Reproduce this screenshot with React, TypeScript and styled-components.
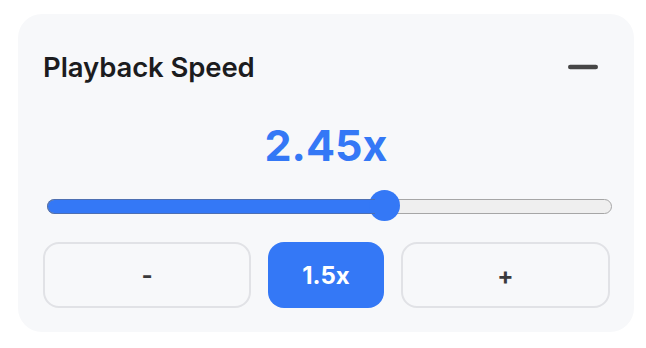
import React, { useState } from 'react';
import styled, { createGlobalStyle } from 'styled-components';

const GlobalStyle = createGlobalStyle`
  body {
    margin: 0;
    background: #ffffff;
    font-family: Inter, "Liberation Sans", Arial, sans-serif;
  }
`;

const Page = styled.div`
  padding: 14px 0 0 18px;
`;

const Card = styled.div`
  width: 616px;
  height: 318px;
  box-sizing: border-box;
  padding: 24px 25px;
  background-color: #f7f8fa;
  border-radius: 24px;
  display: flex;
  flex-direction: column;
`;

const Header = styled.div`
  height: 58px;
  display: flex;
  align-items: center;
  justify-content: space-between;
`;

const Title = styled.h2`
  margin: 0;
  font-size: 27.5px;
  font-weight: 600;
  color: #1c1c1e;
  letter-spacing: -0.1px;
`;

const CollapseButton = styled.button`
  width: 36px;
  height: 36px;
  margin-right: 8px;
  padding: 0;
  border: 0;
  background: transparent;
  display: flex;
  align-items: center;
  justify-content: center;
  cursor: pointer;
`;

const SpeedValue = styled.div`
  margin-top: 21px;
  height: 56px;
  line-height: 56px;
  text-align: center;
  font-size: 43px;
  font-weight: 700;
  color: #3478f6;
`;

const Slider = styled.input<{ $percent: number }>`
  -webkit-appearance: none;
  appearance: none;
  display: block;
  margin: 17px 0 0 4px;
  width: 565px;
  height: 32px;
  background: transparent;
  cursor: pointer;

  &::-webkit-slider-runnable-track {
    height: 15px;
    box-sizing: border-box;
    border-radius: 8px;
    border: 1.5px solid #a6a6a6;
    background: linear-gradient(
      to right,
      #3478f6 0%,
      #3478f6 ${(p) => p.$percent}%,
      #efefef ${(p) => p.$percent}%,
      #efefef 100%
    );
  }

  &::-webkit-slider-thumb {
    -webkit-appearance: none;
    width: 31px;
    height: 31px;
    margin-top: -9.5px;
    border-radius: 50%;
    background: #3478f6;
    border: 0;
  }
`;

const SliderWrap = styled.div<{ $percent: number }>`
  position: relative;

  &::before {
    content: '';
    position: absolute;
    left: 4px;
    top: 25.5px;
    height: 15px;
    width: ${(p) => p.$percent}%;
    box-sizing: border-box;
    border: 1.5px solid #4d6fb2;
    border-right: 0;
    border-radius: 8px 0 0 8px;
    pointer-events: none;
  }
`;

const ButtonRow = styled.div`
  margin-top: 20px;
  display: grid;
  grid-template-columns: 208px 116px 209px;
  gap: 17px;
`;

const StepButton = styled.button<{ $active?: boolean }>`
  height: 66px;
  box-sizing: border-box;
  border-radius: 16px;
  border: ${(p) => (p.$active ? '0' : '2px solid #e1e2e6')};
  background: ${(p) => (p.$active ? '#3478f6' : '#f7f8fa')};
  color: ${(p) => (p.$active ? '#ffffff' : '#3a3a3c')};
  font-family: Inter, "Liberation Sans", Arial, sans-serif;
  font-size: ${(p) => (p.$active ? '24px' : '24px')};
  font-weight: 700;
  cursor: pointer;
`;

const MIN = 0.1;
const MAX = 4;

const App: React.FC = () => {
  const [speed, setSpeed] = useState(2.45);
  const percent = ((speed - MIN) / (MAX - MIN)) * 100;
  // the thumb sits inside the track, so the fill has to be corrected for its width
  const fill = (15.5 + (percent / 100) * (565 - 31)) / 565 * 100;

  return (
    <Page>
      <GlobalStyle />
      <Card>
        <Header>
          <Title>Playback Speed</Title>
          <CollapseButton aria-label="Collapse">
            <svg width="30" height="6" viewBox="0 0 30 6">
              <line x1="2.2" y1="3" x2="27.8" y2="3" stroke="#464646" strokeWidth="4.4" strokeLinecap="round" />
            </svg>
          </CollapseButton>
        </Header>

        <SpeedValue>{speed.toFixed(2)}x</SpeedValue>

        <SliderWrap $percent={fill * 0.97}>
          <Slider
            type="range"
            min={MIN}
            max={MAX}
            step={0.05}
            value={speed}
            $percent={fill}
            onChange={(e) => setSpeed(parseFloat(e.target.value))}
          />
        </SliderWrap>

        <ButtonRow>
          <StepButton onClick={() => setSpeed((s) => Math.max(MIN, s - 0.25))}>-</StepButton>
          <StepButton $active onClick={() => setSpeed(1.5)}>1.5x</StepButton>
          <StepButton onClick={() => setSpeed((s) => Math.min(MAX, s + 0.25))}>+</StepButton>
        </ButtonRow>
      </Card>
    </Page>
  );
};

export default App;
